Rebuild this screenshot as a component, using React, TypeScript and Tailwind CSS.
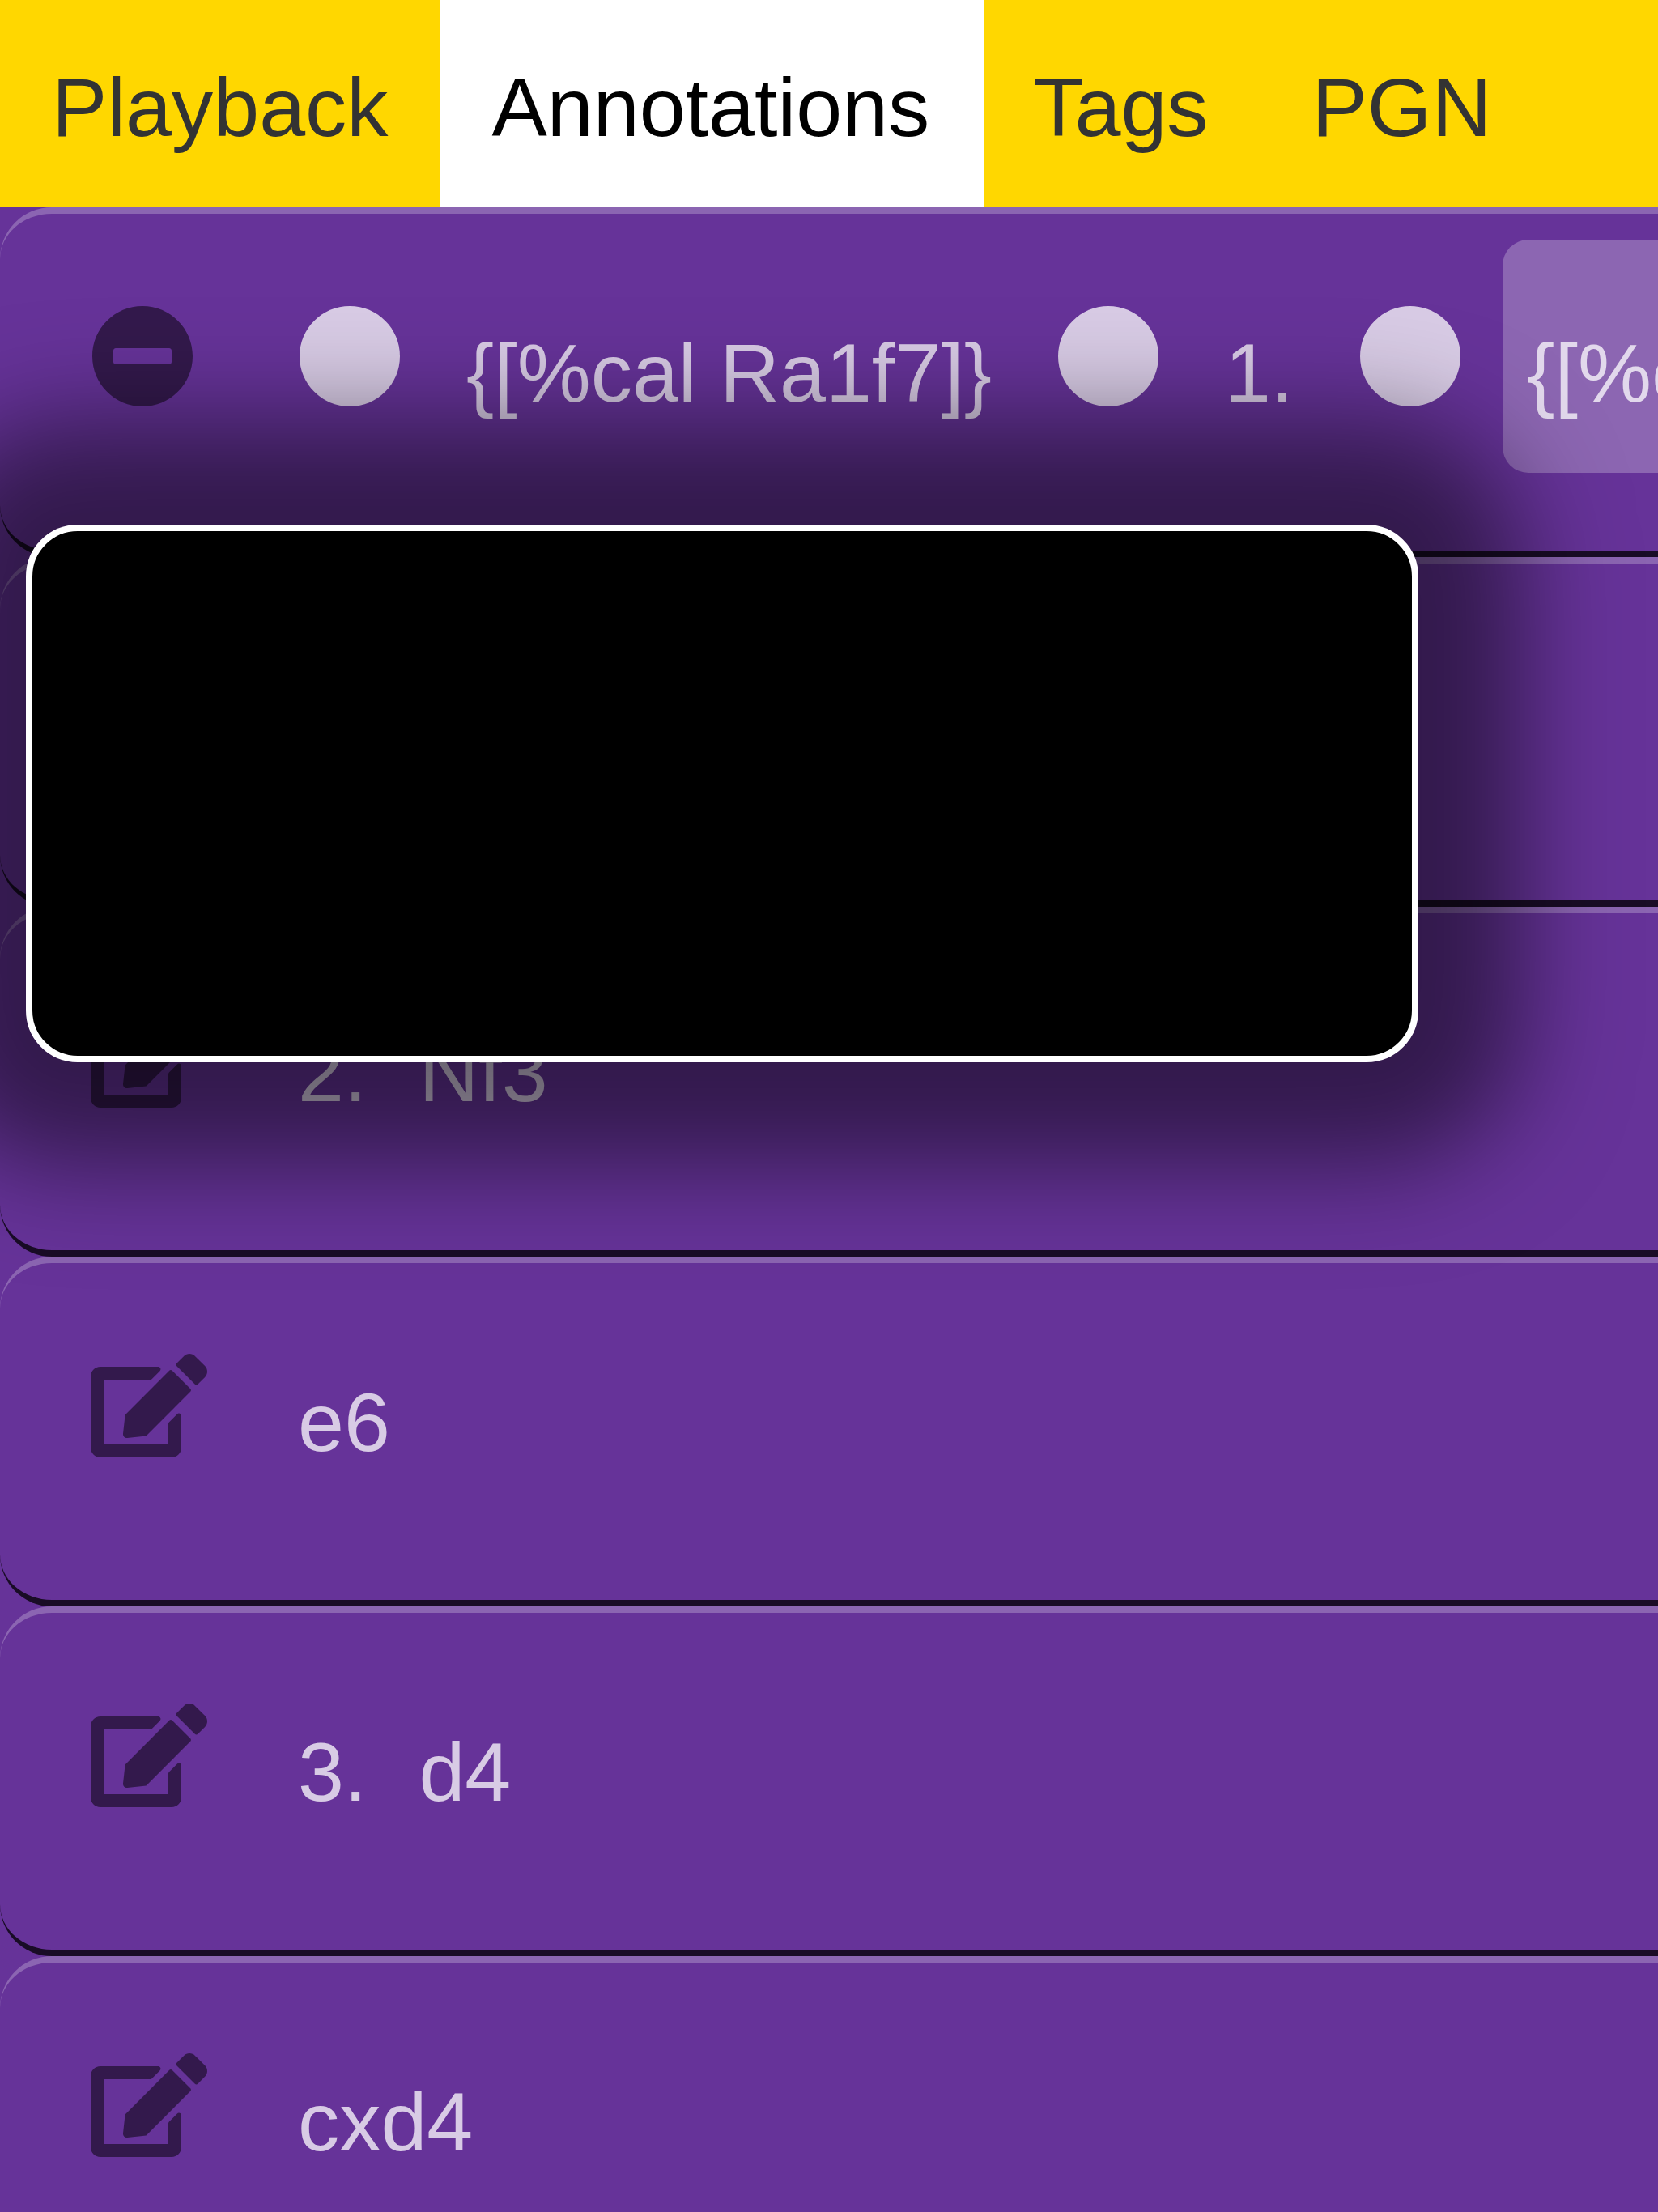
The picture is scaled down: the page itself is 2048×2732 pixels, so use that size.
import React from "react";
import { FaCircle, FaEdit, FaMinusCircle } from "react-icons/fa";

const tabs = ["Playback", "Annotations", "Tags", "PGN"];

function Row({ children }: { children?: React.ReactNode }) {
  return (
    <div className="flex h-[432px] shrink-0 items-start overflow-hidden rounded-l-[64px] border-y-8 border-t-white/25 border-b-black/75 pl-[112px] text-white/75">
      {children}
    </div>
  );
}

function Text({ children }: { children: React.ReactNode }) {
  return <span className="shrink-0 whitespace-pre pt-[139px] leading-[115px]">{children}</span>;
}

function Move({ number, san }: { number?: string; san: string }) {
  return (
    <Row>
      <FaEdit className="mt-[112px] mr-[112px] h-[128px] w-[144px] shrink-0 text-black/50" />
      <div className="flex gap-[64px]">
        {number && <Text>{number}</Text>}
        <Text>{san}</Text>
      </div>
    </Row>
  );
}

function Token({ children, selected }: { children: React.ReactNode; selected?: boolean }) {
  return (
    <div
      className={
        selected
          ? "mt-[32px] ml-[1.6px] flex h-[288px] shrink-0 rounded-[32px] bg-white/25 pr-[32px] pl-[30.4px]"
          : "mt-[32px] flex h-[288px] shrink-0 rounded-[32px] px-[32px]"
      }
    >
      <span className="whitespace-pre pt-[107px] leading-[115px]">{children}</span>
    </div>
  );
}

function Dot() {
  return <FaCircle className="mt-[112px] h-[128px] w-[128px] shrink-0" />;
}

export default function App() {
  return (
    <div className="relative flex h-[2732px] w-[2048px] flex-col overflow-hidden bg-[#663399] font-['Liberation_Sans',Arial,sans-serif] text-[102.4px]">
      <nav className="flex h-[256px] shrink-0 bg-[#ffd700]">
        {tabs.map((tab) => (
          <div
            key={tab}
            className={
              tab === "Annotations"
                ? "mr-[-3.8px] ml-[0.6px] w-[672px] shrink-0 bg-white pt-[75px] pl-[63.4px] leading-[115px] text-black"
                : "px-[64px] pt-[75px] leading-[115px] text-[#333333]"
            }
          >
            {tab}
          </div>
        ))}
      </nav>
      <Row>
        <FaMinusCircle className="mt-[112px] mr-[128px] h-[128px] w-[128px] shrink-0 text-black/50" />
        <div className="flex shrink-0 gap-[48px]">
          <Dot />
          <Token>{"{[%cal Ra1f7]}"}</Token>
          <Dot />
          <Token>1.</Token>
          <Dot />
          <Token selected>{"{[%c"}</Token>
        </div>
      </Row>
      <Row />
      <Move number="2." san="Nf3" />
      <Move san="e6" />
      <Move number="3." san="d4" />
      <Move san="cxd4" />
      <div className="absolute top-[648px] left-[32px] h-[664px] w-[1720px] rounded-[64px] border-8 border-white bg-black shadow-[0_0_128px_128px_rgba(0,0,0,0.5)]" />
    </div>
  );
}
